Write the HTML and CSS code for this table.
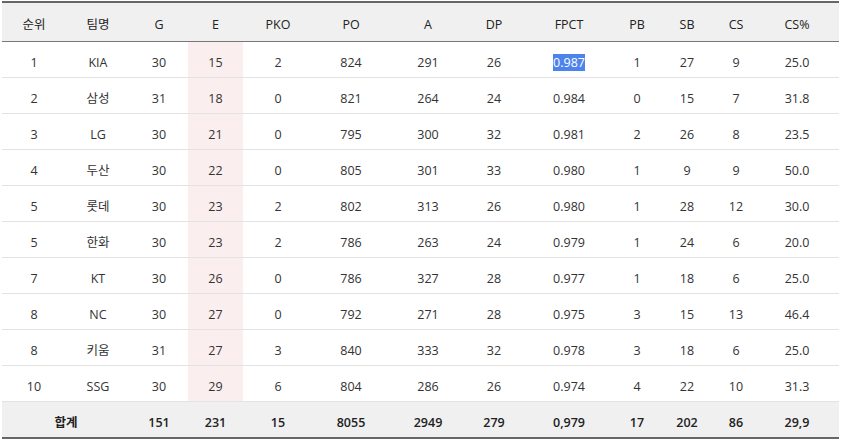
FILE: index.html
```html
<!DOCTYPE html>
<html lang="ko">
<head>
<meta charset="utf-8">
<link rel="stylesheet" href="styles.css">
</head>
<body>
<div class="wrap">
<table class="stats">
  <colgroup>
    <col class="c1"><col class="c2"><col class="c3"><col class="c4"><col class="c5"><col class="c6"><col class="c7"><col class="c8"><col class="c9"><col class="c10"><col class="c11"><col class="c12"><col class="c13">
  </colgroup>
  <thead>
    <tr><th>순위</th><th>팀명</th><th>G</th><th>E</th><th>PKO</th><th>PO</th><th>A</th><th>DP</th><th>FPCT</th><th>PB</th><th>SB</th><th>CS</th><th>CS%</th></tr>
  </thead>
  <tbody>
    <tr><td>1</td><td>KIA</td><td>30</td><td class="hl">15</td><td>2</td><td>824</td><td>291</td><td>26</td><td><span class="sel">0.987</span></td><td>1</td><td>27</td><td>9</td><td>25.0</td></tr>
    <tr><td>2</td><td>삼성</td><td>31</td><td class="hl">18</td><td>0</td><td>821</td><td>264</td><td>24</td><td>0.984</td><td>0</td><td>15</td><td>7</td><td>31.8</td></tr>
    <tr><td>3</td><td>LG</td><td>30</td><td class="hl">21</td><td>0</td><td>795</td><td>300</td><td>32</td><td>0.981</td><td>2</td><td>26</td><td>8</td><td>23.5</td></tr>
    <tr><td>4</td><td>두산</td><td>30</td><td class="hl">22</td><td>0</td><td>805</td><td>301</td><td>33</td><td>0.980</td><td>1</td><td>9</td><td>9</td><td>50.0</td></tr>
    <tr><td>5</td><td>롯데</td><td>30</td><td class="hl">23</td><td>2</td><td>802</td><td>313</td><td>26</td><td>0.980</td><td>1</td><td>28</td><td>12</td><td>30.0</td></tr>
    <tr><td>5</td><td>한화</td><td>30</td><td class="hl">23</td><td>2</td><td>786</td><td>263</td><td>24</td><td>0.979</td><td>1</td><td>24</td><td>6</td><td>20.0</td></tr>
    <tr><td>7</td><td>KT</td><td>30</td><td class="hl">26</td><td>0</td><td>786</td><td>327</td><td>28</td><td>0.977</td><td>1</td><td>18</td><td>6</td><td>25.0</td></tr>
    <tr><td>8</td><td>NC</td><td>30</td><td class="hl">27</td><td>0</td><td>792</td><td>271</td><td>28</td><td>0.975</td><td>3</td><td>15</td><td>13</td><td>46.4</td></tr>
    <tr><td>8</td><td>키움</td><td>31</td><td class="hl">27</td><td>3</td><td>840</td><td>333</td><td>32</td><td>0.978</td><td>3</td><td>18</td><td>6</td><td>25.0</td></tr>
    <tr><td>10</td><td>SSG</td><td>30</td><td class="hl">29</td><td>6</td><td>804</td><td>286</td><td>26</td><td>0.974</td><td>4</td><td>22</td><td>10</td><td>31.3</td></tr>
  </tbody>
  <tfoot>
    <tr><td colspan="2">합계</td><td>151</td><td>231</td><td>15</td><td>8055</td><td>2949</td><td>279</td><td>0,979</td><td>17</td><td>202</td><td>86</td><td>29,9</td></tr>
  </tfoot>
</table>
</div>
</body>
</html>
```

FILE: styles.css
```css
html, body {
  margin: 0;
  padding: 0;
  background: #ffffff;
}

.wrap {
  padding: 1px 3px 0 2px;
}

.stats {
  width: 837px;
  border-collapse: collapse;
  table-layout: fixed;
  font-family: "Open Sans", "Noto Sans CJK KR", sans-serif;
  font-size: 12.5px;
  line-height: 17px;
  color: #333333;
  border-top: 2px solid #666666;
  border-bottom: 2px solid #666666;
}

.c1 { width: 64px; }
.c2 { width: 64px; }
.c3 { width: 58px; }
.c4 { width: 55px; }
.c5 { width: 70px; }
.c6 { width: 76px; }
.c7 { width: 78px; }
.c8 { width: 54px; }
.c9 { width: 96px; }
.c10 { width: 40px; }
.c11 { width: 60px; }
.c12 { width: 38px; }
.c13 { width: 84px; }

.stats th {
  padding: 13px 0 8px 0;
  vertical-align: top;
  background: #f0f0f0;
  font-weight: normal;
  color: #222222;
  text-align: center;
  border-bottom: 1px solid #777777;
}

.stats td {
  padding: 12px 0 6px 0;
  vertical-align: top;
  text-align: center;
  border-bottom: 1px solid #e3e3e3;
}

.stats td.hl {
  background: #fbeeee;
}

.sel {
  background: #4d84ec;
  color: #ffffff;
}

.stats tfoot td {
  background: #f0f0f0;
  font-weight: 600;
  color: #222222;
  border-bottom: none;
}
```
